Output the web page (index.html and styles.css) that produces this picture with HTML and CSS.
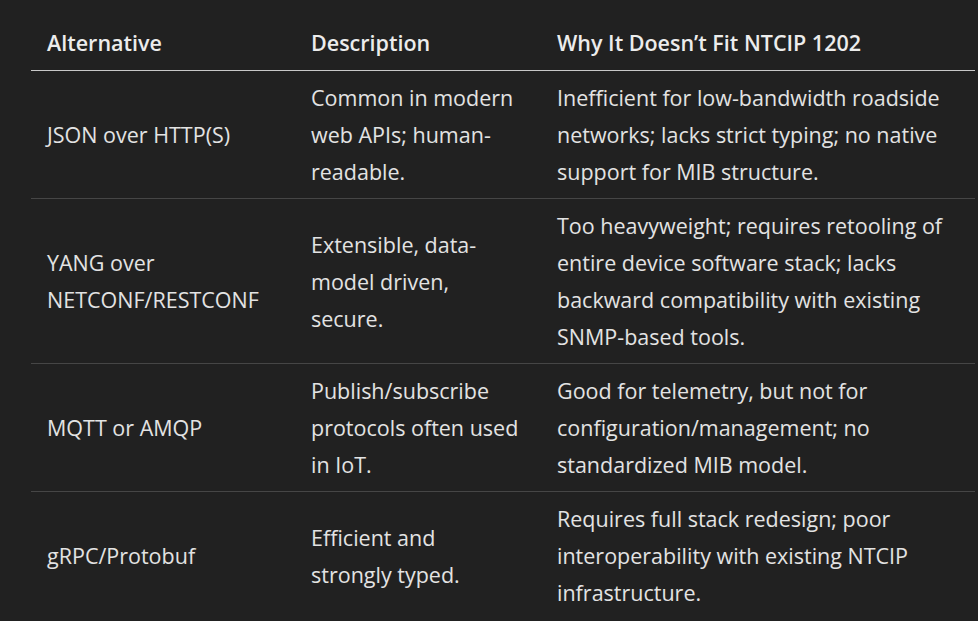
FILE: index.html
```html
<!DOCTYPE html>
<html>
<head>
<meta charset="utf-8">
<link rel="stylesheet" href="styles.css">
</head>
<body>
<table class="tbl">
  <colgroup>
    <col class="c1">
    <col class="c2">
    <col class="c3">
  </colgroup>
  <thead>
    <tr>
      <th>Alternative</th>
      <th>Description</th>
      <th>Why It Doesn’t Fit NTCIP 1202</th>
    </tr>
  </thead>
  <tbody>
    <tr>
      <td>JSON over HTTP(S)</td>
      <td class="desc">Common in modern web APIs; human-readable.</td>
      <td>Inefficient for low-bandwidth roadside networks; lacks strict typing; no native support for MIB structure.</td>
    </tr>
    <tr>
      <td>YANG over NETCONF/RESTCONF</td>
      <td class="desc">Extensible, data-model driven, secure.</td>
      <td>Too heavyweight; requires retooling of entire device software stack; lacks backward compatibility with existing SNMP-based tools.</td>
    </tr>
    <tr>
      <td>MQTT or AMQP</td>
      <td class="desc">Publish/subscribe protocols often used in IoT.</td>
      <td>Good for telemetry, but not for configuration/management; no standardized MIB model.</td>
    </tr>
    <tr>
      <td>gRPC/Protobuf</td>
      <td class="desc">Efficient and strongly typed.</td>
      <td>Requires full stack redesign; poor interoperability with existing NTCIP infrastructure.</td>
    </tr>
  </tbody>
</table>
</body>
</html>
```

FILE: styles.css
```css
html, body {
  margin: 0;
  background: #212121;
}
body {
  padding: 17px 0 0 31px;
  font-family: "Open Sans", "Noto Sans", sans-serif;
  font-size: 21.5px;
  line-height: 37px;
  color: #e3e3e3;
}
.tbl {
  width: 944px;
  border-collapse: collapse;
  table-layout: fixed;
}
.c1 { width: 264px; }
.c2 { width: 246px; }
.c3 { width: 434px; }
.tbl th {
  text-align: left;
  font-weight: 600;
  padding: 7px 10px 9px 16px;
  border-bottom: 1px solid #c8c8c8;
  color: #ececec;
}
.tbl td {
  padding: 8px 10px 8px 16px;
  vertical-align: middle;
  border-bottom: 1px solid #464646;
}
.tbl tbody tr:last-child td {
  border-bottom: none;
}
.tbl td.desc {
  padding-right: 21.5px;
}
```
